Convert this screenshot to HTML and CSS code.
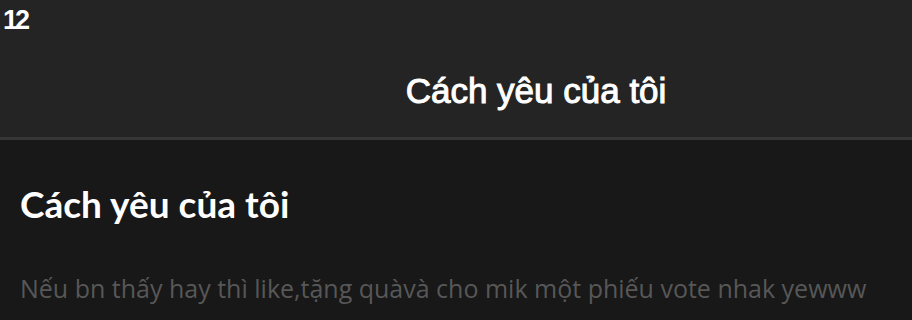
FILE: index.html
```html
<!DOCTYPE html>
<html lang="vi">
<head>
  <meta charset="UTF-8">
  <meta name="viewport" content="width=device-width, initial-scale=1.0">
  <title>Cách yêu của tôi</title>
  <link rel="stylesheet" href="styles.css">
</head>
<body>
  <div class="top">
    <div class="status-bar">12</div>
    <div class="nav-bar">
      <span class="nav-title">Cách yêu của tôi</span>
    </div>
  </div>

  <div class="content">
    <h1 class="story-title">Cách yêu của tôi</h1>
    <p class="story-desc">Nếu bn thấy hay thì like,tặng quàvà cho mik một phiếu vote nhak yewww</p>
  </div>
</body>
</html>
```

FILE: styles.css
```css
body {
  margin: 0;
  background-color: #181818;
  color: #fff;
  font-family: "Liberation Sans", Arial, sans-serif;
  overflow: hidden;
}

.top {
  background-color: #242424;
  height: 137px;
  border-bottom: 3px solid #363636;
}

.status-bar {
  height: 40px;
  padding-left: 3px;
  font-size: 27px;
  line-height: 40px;
  letter-spacing: -3px;
  font-weight: bold;
  color: #fff;
}

.nav-bar {
  display: flex;
  justify-content: center;
  align-items: center;
  height: 97px;
  padding-left: 160px;
  padding-top: 4px;
  box-sizing: border-box;
}

.nav-title {
  font-size: 35px;
  -webkit-text-stroke: 1px #fff;
  color: #fff;
}

.content {
  padding: 0 20px;
  font-family: Lato, "Noto Sans", sans-serif;
}

.story-title {
  font-size: 37px;
  font-weight: bold;
  margin: 42px 0 0 0;
  line-height: 44px;
  color: #fff;
}

.story-desc {
  font-family: "Open Sans", "Noto Sans", sans-serif;
  font-size: 25px;
  margin: 46px 0 0 0;
  line-height: 32px;
  color: #575757;
  white-space: nowrap;
}
```
